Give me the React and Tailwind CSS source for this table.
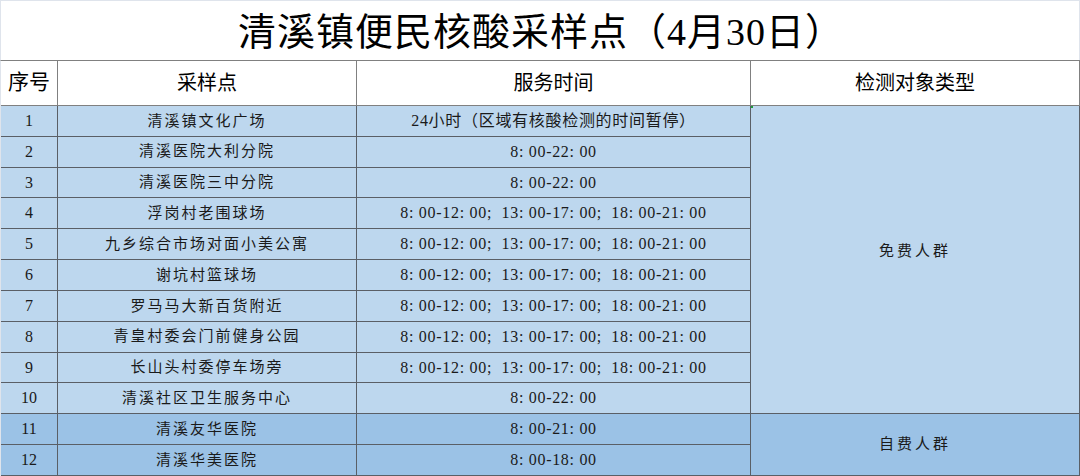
const rows = [
  { no: '1', site: '清溪镇文化广场', time: '24小时（区域有核酸检测的时间暂停）' },
  { no: '2', site: '清溪医院大利分院', time: '8: 00-22: 00' },
  { no: '3', site: '清溪医院三中分院', time: '8: 00-22: 00' },
  { no: '4', site: '浮岗村老围球场', time: '8: 00-12: 00;  13: 00-17: 00;  18: 00-21: 00' },
  { no: '5', site: '九乡综合市场对面小美公寓', time: '8: 00-12: 00;  13: 00-17: 00;  18: 00-21: 00' },
  { no: '6', site: '谢坑村篮球场', time: '8: 00-12: 00;  13: 00-17: 00;  18: 00-21: 00' },
  { no: '7', site: '罗马马大新百货附近', time: '8: 00-12: 00;  13: 00-17: 00;  18: 00-21: 00' },
  { no: '8', site: '青皇村委会门前健身公园', time: '8: 00-12: 00;  13: 00-17: 00;  18: 00-21: 00' },
  { no: '9', site: '长山头村委停车场旁', time: '8: 00-12: 00;  13: 00-17: 00;  18: 00-21: 00' },
  { no: '10', site: '清溪社区卫生服务中心', time: '8: 00-22: 00' },
  { no: '11', site: '清溪友华医院', time: '8: 00-21: 00', paid: true },
  { no: '12', site: '清溪华美医院', time: '8: 00-18: 00', paid: true },
];

const font = { fontFamily: '"Liberation Serif", "Noto Sans CJK SC", serif' };

export default function App() {
  return (
    <div className="w-[1080px] h-[476px] bg-white overflow-hidden text-[#1a1a1a]" style={font}>
      <div className="h-[60px] flex items-center justify-center border-t border-l border-r border-[#dfe4ec] w-[1080px]">
        <h1 className="text-[38px] font-normal tracking-[1px] text-black pl-[2px] pt-[4px]">
          清溪镇便民核酸采样点（4月30日）
        </h1>
      </div>
      <div className="grid grid-cols-[57px_299px_394px_329px] grid-rows-[45px_repeat(12,30.83px)] border-t border-l border-t-[#808080] border-l-[#dfe4ec] w-[1080px]">
        <div className="flex items-center justify-center border-r border-b border-[#808080] text-[21px] text-black">序号</div>
        <div className="flex items-center justify-center border-r border-b border-[#808080] text-[20px] text-black">采样点</div>
        <div className="flex items-center justify-center border-r border-b border-[#808080] text-[20px] text-black">服务时间</div>
        <div className="flex items-center justify-center border-r border-b border-[#808080] text-[20px] text-black">检测对象类型</div>

        {rows.map((r, i) => {
          const bg = r.paid ? 'bg-[#9bc2e6]' : 'bg-[#bdd7ee]';
          return [
            <div key={'n' + i} className={`${bg} flex items-center justify-center border-r border-b border-[#5a5f66] text-[16px]`}>{r.no}</div>,
            <div key={'s' + i} className={`${bg} flex items-center justify-center border-r border-b border-[#5a5f66] text-[15px] tracking-[2px]`}>{r.site}</div>,
            <div key={'t' + i} className={`${bg} flex items-center justify-center border-r border-b border-[#5a5f66] text-[16px] tracking-[0.7px] whitespace-pre`}>{r.time}</div>,
            i === 0 ? (
              <div key="free" className="row-span-10 relative bg-[#bdd7ee] flex items-center justify-center border-r border-b border-[#5a5f66] text-[15px] tracking-[3px] pb-[16px]">
                <span className="absolute left-0 top-0 w-[2px] h-[2px] bg-[#1f9d3a]" />
                免费人群
              </div>
            ) : i === 10 ? (
              <div key="paid" className="row-span-2 bg-[#9bc2e6] flex items-center justify-center border-r border-b border-[#5a5f66] text-[15px] tracking-[3px]">
                自费人群
              </div>
            ) : null,
          ];
        })}
      </div>
    </div>
  );
}
